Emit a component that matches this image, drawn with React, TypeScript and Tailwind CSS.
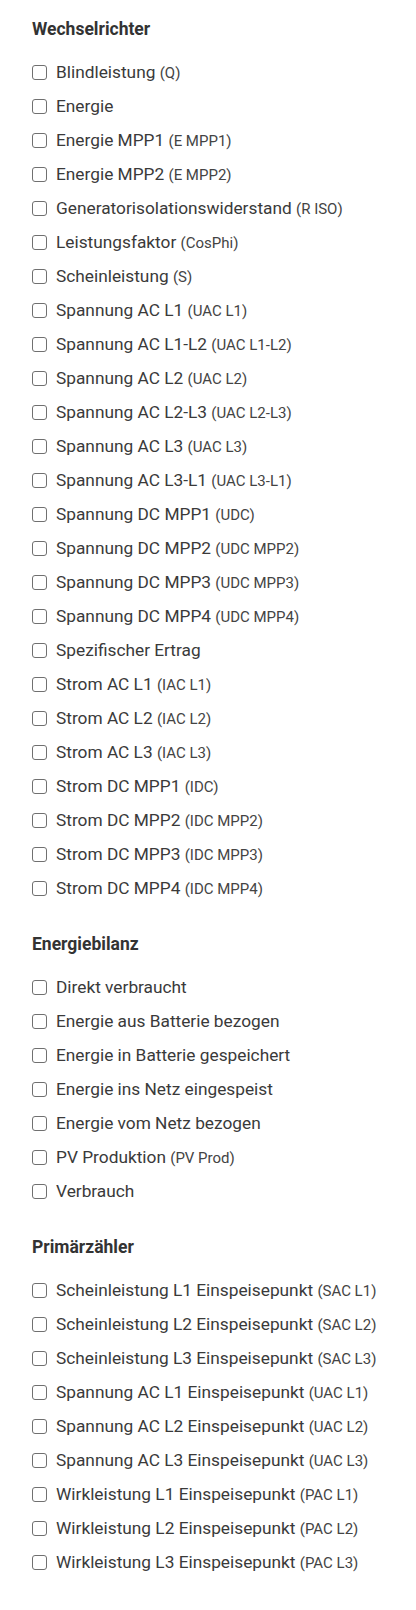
import React from "react";

type Item = [string, string?];

const sections: { title: string; items: Item[] }[] = [
  {
    title: "Wechselrichter",
    items: [
      ["Blindleistung", "Q"],
      ["Energie"],
      ["Energie MPP1", "E MPP1"],
      ["Energie MPP2", "E MPP2"],
      ["Generatorisolationswiderstand", "R ISO"],
      ["Leistungsfaktor", "CosPhi"],
      ["Scheinleistung", "S"],
      ["Spannung AC L1", "UAC L1"],
      ["Spannung AC L1-L2", "UAC L1-L2"],
      ["Spannung AC L2", "UAC L2"],
      ["Spannung AC L2-L3", "UAC L2-L3"],
      ["Spannung AC L3", "UAC L3"],
      ["Spannung AC L3-L1", "UAC L3-L1"],
      ["Spannung DC MPP1", "UDC"],
      ["Spannung DC MPP2", "UDC MPP2"],
      ["Spannung DC MPP3", "UDC MPP3"],
      ["Spannung DC MPP4", "UDC MPP4"],
      ["Spezifischer Ertrag"],
      ["Strom AC L1", "IAC L1"],
      ["Strom AC L2", "IAC L2"],
      ["Strom AC L3", "IAC L3"],
      ["Strom DC MPP1", "IDC"],
      ["Strom DC MPP2", "IDC MPP2"],
      ["Strom DC MPP3", "IDC MPP3"],
      ["Strom DC MPP4", "IDC MPP4"],
    ],
  },
  {
    title: "Energiebilanz",
    items: [
      ["Direkt verbraucht"],
      ["Energie aus Batterie bezogen"],
      ["Energie in Batterie gespeichert"],
      ["Energie ins Netz eingespeist"],
      ["Energie vom Netz bezogen"],
      ["PV Produktion", "PV Prod"],
      ["Verbrauch"],
    ],
  },
  {
    title: "Primärzähler",
    items: [
      ["Scheinleistung L1 Einspeisepunkt", "SAC L1"],
      ["Scheinleistung L2 Einspeisepunkt", "SAC L2"],
      ["Scheinleistung L3 Einspeisepunkt", "SAC L3"],
      ["Spannung AC L1 Einspeisepunkt", "UAC L1"],
      ["Spannung AC L2 Einspeisepunkt", "UAC L2"],
      ["Spannung AC L3 Einspeisepunkt", "UAC L3"],
      ["Wirkleistung L1 Einspeisepunkt", "PAC L1"],
      ["Wirkleistung L2 Einspeisepunkt", "PAC L2"],
      ["Wirkleistung L3 Einspeisepunkt", "PAC L3"],
    ],
  },
];

export default function App() {
  return (
    <div
      className="bg-white pl-8 pr-2 pt-[17px] pb-[31px] text-[#333333]"
      style={{ fontFamily: "Roboto, 'Liberation Sans', sans-serif" }}
    >
      <div className="flex flex-col gap-[27px]">
        {sections.map((s) => (
          <div key={s.title}>
            <h2 className="h-6 text-[17.5px] font-bold leading-6 text-[#333333]">{s.title}</h2>
            <ul className="mt-[14px] flex flex-col">
              {s.items.map(([label, abbr]) => (
                <li key={label + (abbr ?? "")} className="flex h-[34px] items-center">
                  <span className="box-border h-[15px] w-[15px] shrink-0 rounded-[3px] border border-[#707070] bg-white" />
                  <span className="ml-[9px] whitespace-nowrap text-[17.3px] font-normal leading-6 text-[#3a3a3a]">
                    {label}
                    {abbr && (
                      <>
                        {" "}
                        <span className="text-[15px] text-[#444444]">({abbr})</span>
                      </>
                    )}
                  </span>
                </li>
              ))}
            </ul>
          </div>
        ))}
      </div>
    </div>
  );
}
